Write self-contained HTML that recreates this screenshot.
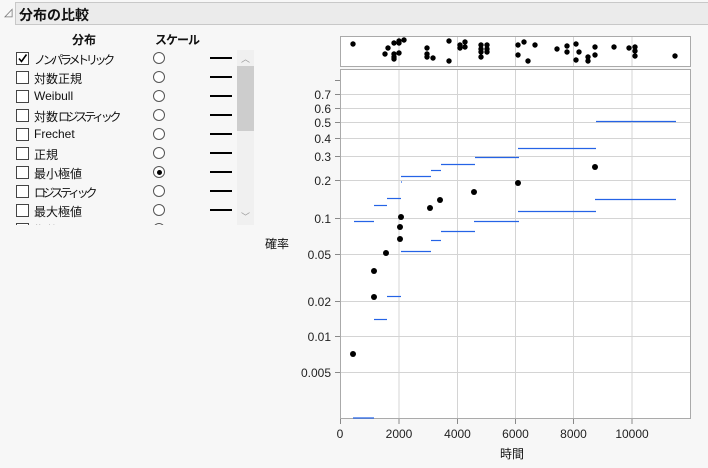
<!DOCTYPE html>
<html><head><meta charset="utf-8"><style>
body{margin:0;width:708px;height:468px;background:#f7f7f7;font-family:"Liberation Sans","Noto Sans CJK JP",sans-serif;position:relative;overflow:hidden;color:#111}
.hdr{position:absolute;left:15px;top:2px;width:693px;height:23px;background:#ebebeb;border:1px solid #c8c8c8;border-right:none;box-sizing:border-box}
.hdr span{position:absolute;left:3px;top:2px;font-size:14px;font-weight:bold}
.tri{position:absolute;left:3px;top:5px;font-size:11px;color:#777}
.list{position:absolute;left:0;top:48px;width:260px;height:177px;overflow:hidden}
.row{position:absolute;left:0;height:19px;width:240px;font-size:12px}
.cb{position:absolute;left:16px;top:3px;width:11px;height:11px;border:1px solid #444;background:#fff}
.tx{position:absolute;left:34px;top:2px;white-space:nowrap}
.k{letter-spacing:-3.3px}
.rd{position:absolute;left:153px;top:3px;width:10px;height:10px;border:1px solid #555;border-radius:50%;background:#fff}
.ln{position:absolute;left:210px;top:8px;width:22px;height:2px;background:#000}
.hd{position:absolute;top:31px;font-size:12px;font-weight:bold}
</style></head><body>
<div class="tri">⊿</div>
<div class="hdr"><span>分布の比較</span></div>
<div class="hd" style="left:72px">分布</div>
<div class="hd" style="left:155px;letter-spacing:-1px">スケール</div>
<div class="list">
<div class="row" style="top:1px"><div class="cb"><svg width="11" height="11" style="position:absolute;left:0;top:0"><path d="M2 5.5 L4.5 8.5 L9.5 1.5" stroke="#000" stroke-width="1.6" fill="none"/></svg></div><div class="tx k">ノンパラメトリック</div><div class="rd"></div><div class="ln"></div></div>
<div class="row" style="top:20px"><div class="cb"></div><div class="tx">対数正規</div><div class="rd"></div><div class="ln"></div></div>
<div class="row" style="top:39px"><div class="cb"></div><div class="tx">Weibull</div><div class="rd"></div><div class="ln"></div></div>
<div class="row" style="top:58px"><div class="cb"></div><div class="tx">対数<span class="k">ロジスティック</span></div><div class="rd"></div><div class="ln"></div></div>
<div class="row" style="top:77px"><div class="cb"></div><div class="tx">Frechet</div><div class="rd"></div><div class="ln"></div></div>
<div class="row" style="top:96px"><div class="cb"></div><div class="tx">正規</div><div class="rd"></div><div class="ln"></div></div>
<div class="row" style="top:115px"><div class="cb"></div><div class="tx">最小極値</div><div class="rd"><div style="position:absolute;left:2.5px;top:2.5px;width:5px;height:5px;border-radius:50%;background:#000"></div></div><div class="ln"></div></div>
<div class="row" style="top:134px"><div class="cb"></div><div class="tx k">ロジスティック</div><div class="rd"></div><div class="ln"></div></div>
<div class="row" style="top:153px"><div class="cb"></div><div class="tx">最大極値</div><div class="rd"></div><div class="ln"></div></div>
<div class="row" style="top:172px"><div class="cb"></div><div class="tx">指数</div><div class="rd"></div><div class="ln"></div></div>
<div style="position:absolute;left:237px;top:2px;width:17px;height:175px;background:#f0f0f0"></div>
<div style="position:absolute;left:237px;top:18px;width:17px;height:65px;background:#cdcdcd"></div>
<div style="position:absolute;left:241px;top:4px;font-size:9px;color:#999">︿</div>
<div style="position:absolute;left:241px;top:162px;font-size:9px;color:#999">﹀</div>
</div>
<div style="position:absolute;left:265px;top:235px;font-size:12px">確率</div>
<div style="position:absolute;left:500px;top:445px;font-size:12px">時間</div>
<svg width="708" height="468" style="position:absolute;left:0;top:0" font-family="Liberation Sans, sans-serif" font-size="12" fill="#222">
<rect x="340.5" y="36.5" width="350" height="30" fill="#fff" stroke="#aaa"/>
<rect x="340.5" y="69.5" width="350" height="349" fill="#fff" stroke="#aaa"/>
<g stroke="#d4d4d4" stroke-width="1">
<line x1="399" y1="37" x2="399" y2="66"/><line x1="457.5" y1="37" x2="457.5" y2="66"/><line x1="515.5" y1="37" x2="515.5" y2="66"/><line x1="573.5" y1="37" x2="573.5" y2="66"/><line x1="632" y1="37" x2="632" y2="66"/>
<line x1="399" y1="70" x2="399" y2="418"/><line x1="457.5" y1="70" x2="457.5" y2="418"/><line x1="515.5" y1="70" x2="515.5" y2="418"/><line x1="573.5" y1="70" x2="573.5" y2="418"/><line x1="632" y1="70" x2="632" y2="418"/>
<line x1="341" y1="94.5" x2="690" y2="94.5"/><line x1="341" y1="108.5" x2="690" y2="108.5"/><line x1="341" y1="122.5" x2="690" y2="122.5"/><line x1="341" y1="138.5" x2="690" y2="138.5"/><line x1="341" y1="156.5" x2="690" y2="156.5"/><line x1="341" y1="180.5" x2="690" y2="180.5"/><line x1="341" y1="218.5" x2="690" y2="218.5"/><line x1="341" y1="254.5" x2="690" y2="254.5"/><line x1="341" y1="301.5" x2="690" y2="301.5"/><line x1="341" y1="336.5" x2="690" y2="336.5"/><line x1="341" y1="372.5" x2="690" y2="372.5"/>
</g>
<g stroke="#888"><line x1="335" y1="80.5" x2="340" y2="80.5"/><line x1="335" y1="94.5" x2="340" y2="94.5"/><line x1="335" y1="108.5" x2="340" y2="108.5"/><line x1="335" y1="122.5" x2="340" y2="122.5"/><line x1="335" y1="138.5" x2="340" y2="138.5"/><line x1="335" y1="156.5" x2="340" y2="156.5"/><line x1="335" y1="180.5" x2="340" y2="180.5"/><line x1="335" y1="218.5" x2="340" y2="218.5"/><line x1="335" y1="254.5" x2="340" y2="254.5"/><line x1="335" y1="301.5" x2="340" y2="301.5"/><line x1="335" y1="336.5" x2="340" y2="336.5"/><line x1="335" y1="372.5" x2="340" y2="372.5"/>
<line x1="340.5" y1="419" x2="340.5" y2="424"/><line x1="399" y1="419" x2="399" y2="424"/><line x1="457.5" y1="419" x2="457.5" y2="424"/><line x1="515.5" y1="419" x2="515.5" y2="424"/><line x1="573.5" y1="419" x2="573.5" y2="424"/><line x1="632" y1="419" x2="632" y2="424"/></g>
<g text-anchor="end"><text x="331" y="99">0.7</text><text x="331" y="113">0.6</text><text x="331" y="127">0.5</text><text x="331" y="143">0.4</text><text x="331" y="161">0.3</text><text x="331" y="185">0.2</text><text x="331" y="223">0.1</text><text x="331" y="259">0.05</text><text x="331" y="306">0.02</text><text x="331" y="341">0.01</text><text x="331" y="377">0.005</text></g>
<g text-anchor="middle"><text x="340" y="438">0</text><text x="399" y="438">2000</text><text x="457.5" y="438">4000</text><text x="515.5" y="438">6000</text><text x="573.5" y="438">8000</text><text x="632" y="438">10000</text></g>
<g stroke="#2563e6" stroke-width="1.2">
<line x1="354" y1="221.5" x2="374" y2="221.5"/><line x1="374" y1="205.5" x2="387" y2="205.5"/><line x1="387" y1="198.5" x2="401" y2="198.5"/><line x1="401" y1="176.5" x2="431" y2="176.5"/><line x1="431" y1="170.5" x2="441" y2="170.5"/><line x1="441" y1="164.5" x2="475" y2="164.5"/><line x1="475" y1="157.5" x2="519" y2="157.5"/><line x1="518" y1="148.5" x2="596" y2="148.5"/><line x1="596" y1="121.5" x2="676" y2="121.5"/><line x1="595" y1="199.5" x2="676" y2="199.5"/><line x1="518" y1="211.5" x2="596" y2="211.5"/><line x1="474" y1="221.5" x2="519" y2="221.5"/><line x1="441" y1="231.5" x2="475" y2="231.5"/><line x1="431" y1="240.5" x2="441" y2="240.5"/><line x1="401" y1="251.5" x2="431" y2="251.5"/><line x1="387" y1="296.5" x2="401" y2="296.5"/><line x1="374" y1="319.5" x2="387" y2="319.5"/><line x1="353" y1="418" x2="374" y2="418"/><line x1="401" y1="182" x2="402" y2="182"/>
</g>
<g fill="#000">
<circle cx="595" cy="167" r="3"/><circle cx="518" cy="183" r="3"/><circle cx="474" cy="192" r="3"/><circle cx="440" cy="200" r="3"/><circle cx="430" cy="208" r="3"/><circle cx="401" cy="217" r="3"/><circle cx="400" cy="227" r="3"/><circle cx="400" cy="239" r="3"/><circle cx="386" cy="253" r="3"/><circle cx="374" cy="271" r="3"/><circle cx="374" cy="297" r="3"/><circle cx="353" cy="354" r="3"/>
<circle cx="353" cy="44" r="2.7"/><circle cx="388" cy="48" r="2.7"/><circle cx="385" cy="54" r="2.7"/><circle cx="394" cy="43" r="2.7"/><circle cx="394" cy="54" r="2.7"/><circle cx="394" cy="57" r="2.7"/><circle cx="394" cy="59" r="2.7"/><circle cx="399" cy="41" r="2.7"/><circle cx="399" cy="43" r="2.7"/><circle cx="399" cy="53" r="2.7"/><circle cx="404" cy="40" r="2.7"/><circle cx="427" cy="48" r="2.7"/><circle cx="427" cy="54" r="2.7"/><circle cx="427" cy="57" r="2.7"/><circle cx="433" cy="58" r="2.7"/><circle cx="449" cy="41" r="2.7"/><circle cx="449" cy="61" r="2.7"/><circle cx="460" cy="45" r="2.7"/><circle cx="460" cy="48" r="2.7"/><circle cx="465" cy="42" r="2.7"/><circle cx="465" cy="47" r="2.7"/><circle cx="481" cy="45" r="2.7"/><circle cx="481" cy="49" r="2.7"/><circle cx="481" cy="52" r="2.7"/><circle cx="487" cy="45" r="2.7"/><circle cx="487" cy="49" r="2.7"/><circle cx="487" cy="52" r="2.7"/><circle cx="481" cy="57" r="2.7"/><circle cx="518" cy="45" r="2.7"/><circle cx="524" cy="42" r="2.7"/><circle cx="518" cy="55" r="2.7"/><circle cx="528" cy="61" r="2.7"/><circle cx="535" cy="45" r="2.7"/><circle cx="557" cy="49" r="2.7"/><circle cx="567" cy="46" r="2.7"/><circle cx="567" cy="52" r="2.7"/><circle cx="576" cy="44" r="2.7"/><circle cx="579" cy="52" r="2.7"/><circle cx="576" cy="60" r="2.7"/><circle cx="588" cy="57" r="2.7"/><circle cx="588" cy="61" r="2.7"/><circle cx="595" cy="47" r="2.7"/><circle cx="595" cy="55" r="2.7"/><circle cx="614" cy="47" r="2.7"/><circle cx="629" cy="48" r="2.7"/><circle cx="635" cy="47" r="2.7"/><circle cx="635" cy="51" r="2.7"/><circle cx="635" cy="56" r="2.7"/><circle cx="675" cy="56" r="2.7"/>
</g>
</svg>
</body></html>
